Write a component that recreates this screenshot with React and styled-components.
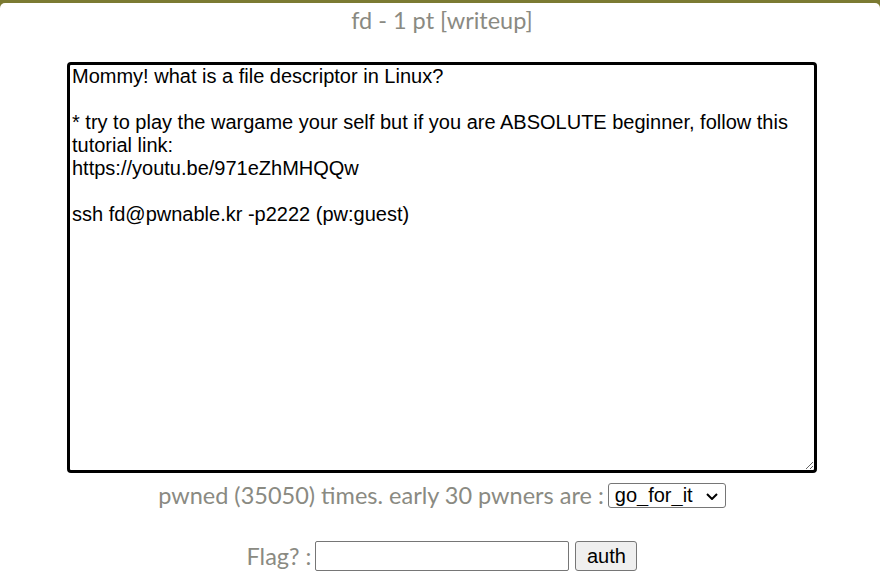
import React from 'react'
import styled, { createGlobalStyle } from 'styled-components'

const Global = createGlobalStyle`
body {
  margin: 0;
  background-color: #7b7a32;
  font-family: Lato, "Liberation Sans", sans-serif;
}
`

const Page = styled.div`
  margin-top: 3px;
  padding-left: 4px;
  background-color: white;
  border-radius: 5px 5px 0 0;
  min-height: 583px;
  display: flex;
  flex-direction: column;
  align-items: center;
`

const Title = styled.div`
  color: #8a8a82;
  font-size: 23.5px;
  height: 35px;
  line-height: 35px;
  margin-bottom: 24px;
`

const Box = styled.textarea`
  width: 750px;
  height: 411px;
  box-sizing: border-box;
  border: 3px solid #000;
  border-radius: 4px;
  padding: 0 2px;
  font-family: "Liberation Sans", Arial, sans-serif;
  font-size: 20px;
  line-height: 23px;
  color: #000;
  resize: both;
  outline: none;
  margin: 0;
`

const Row = styled.div`
  display: flex;
  align-items: center;
  gap: 4px;
  color: #8a8a82;
  font-size: 23.5px;
  margin-top: ${p => p.top}px;
`

const SelectWrap = styled.div`
  position: relative;
  display: flex;
`

const Select = styled.select`
  appearance: none;
  font-family: "Liberation Sans", Arial, sans-serif;
  font-size: 20px;
  width: 118px;
  height: 25px;
  border: 1px solid #767676;
  border-radius: 3px;
  background: white;
  color: #000;
  padding: 0 6px;
`

const Chevron = styled.svg`
  position: absolute;
  right: 8px;
  top: 10px;
  pointer-events: none;
`

const Input = styled.input`
  width: 254px;
  height: 30px;
  box-sizing: border-box;
  border: 1px solid #767676;
  border-radius: 2px;
  font-size: 19px;
  margin-right: 2px;
`

const Button = styled.button`
  height: 30px;
  width: 62px;
  box-sizing: border-box;
  background-color: #efefef;
  border: 1px solid #767676;
  border-radius: 3px;
  font-family: "Liberation Sans", Arial, sans-serif;
  font-size: 20px;
  color: #000;
  padding: 0;
`

const text = `Mommy! what is a file descriptor in Linux?

* try to play the wargame your self but if you are ABSOLUTE beginner, follow this tutorial link:
https://youtu.be/971eZhMHQQw

ssh fd@pwnable.kr -p2222 (pw:guest)`

export default function App() {
  return (
    <>
      <Global />
      <Page>
        <Title>fd - 1 pt [writeup]</Title>
        <Box defaultValue={text} readOnly />
        <Row top={8}>
          pwned (35050) times. early 30 pwners are :
          <SelectWrap>
            <Select defaultValue="go_for_it">
              <option>go_for_it</option>
            </Select>
            <Chevron width="12" height="7" viewBox="0 0 12 7">
              <path d="M1 1l5 5 5-5" fill="none" stroke="#000" strokeWidth="2" />
            </Chevron>
          </SelectWrap>
        </Row>
        <Row top={32}>
          Flag? :
          <Input />
          <Button>auth</Button>
        </Row>
      </Page>
    </>
  )
}
